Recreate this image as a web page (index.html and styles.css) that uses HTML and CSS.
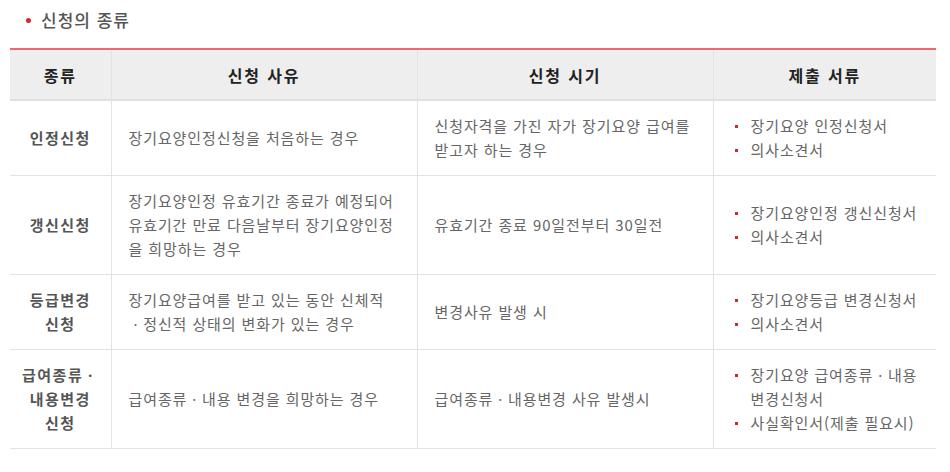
FILE: index.html
```html
<!DOCTYPE html>
<html lang="ko">
<head>
<meta charset="utf-8">
<title>신청의 종류</title>
<link rel="stylesheet" href="styles.css">
</head>
<body>
<div class="wrap">
  <h2 class="title"><span class="dot"></span>신청의 종류</h2>
  <table class="kind-table">
    <colgroup>
      <col class="c1"><col class="c2"><col class="c3"><col class="c4">
    </colgroup>
    <thead>
      <tr>
        <th>종류</th>
        <th>신청 사유</th>
        <th>신청 시기</th>
        <th>제출 서류</th>
      </tr>
    </thead>
    <tbody>
      <tr>
        <td class="kind">인정신청</td>
        <td>장기요양인정신청을 처음하는 경우</td>
        <td>신청자격을 가진 자가 장기요양 급여를<br>받고자 하는 경우</td>
        <td><ul class="docs"><li>장기요양 인정신청서</li><li>의사소견서</li></ul></td>
      </tr>
      <tr>
        <td class="kind">갱신신청</td>
        <td>장기요양인정 유효기간 종료가 예정되어<br>유효기간 만료 다음날부터 장기요양인정<br>을 희망하는 경우</td>
        <td>유효기간 종료 90일전부터 30일전</td>
        <td><ul class="docs"><li>장기요양인정 갱신신청서</li><li>의사소견서</li></ul></td>
      </tr>
      <tr>
        <td class="kind">등급변경<br>신청</td>
        <td>장기요양급여를 받고 있는 동안 신체적<br>ㆍ정신적 상태의 변화가 있는 경우</td>
        <td>변경사유 발생 시</td>
        <td><ul class="docs"><li>장기요양등급 변경신청서</li><li>의사소견서</li></ul></td>
      </tr>
      <tr>
        <td class="kind">급여종류ㆍ<br>내용변경<br>신청</td>
        <td>급여종류ㆍ내용 변경을 희망하는 경우</td>
        <td>급여종류ㆍ내용변경 사유 발생시</td>
        <td><ul class="docs"><li>장기요양 급여종류ㆍ내용<br>변경신청서</li><li>사실확인서(제출 필요시)</li></ul></td>
      </tr>
    </tbody>
  </table>
</div>
</body>
</html>
```

FILE: styles.css
```css
* { box-sizing: border-box; }
html, body { margin: 0; padding: 0; background: #fff; }
body {
  font-family: "Noto Sans CJK KR", "Noto Sans", sans-serif;
  color: #666;
}
.wrap {
  padding: 10px 14px 0 10px;
}
.title {
  display: flex;
  align-items: center;
  margin: 0 0 18px 0;
  padding-left: 16px;
  height: 20px;
  font-size: 17px;
  font-weight: 500;
  letter-spacing: 1px;
  color: #555;
  line-height: 20px;
}
.dot {
  width: 5px;
  height: 5px;
  border-radius: 50%;
  background: #cc2b2b;
  margin-right: 10px;
  margin-top: 1px;
}
.kind-table {
  width: 926px;
  border-collapse: collapse;
  table-layout: fixed;
  border-top: 2px solid #e96b6b;
  font-size: 15px;
  line-height: 24px;
  letter-spacing: 0.9px;
}
.c1 { width: 101px; }
.c2 { width: 306px; }
.c3 { width: 296px; }
.c4 { width: 223px; }
.kind-table th {
  background: #eee;
  height: 51px;
  border-top: 1px solid #e6e6e6;
  border-bottom: 2px solid #e0e0e0;
  border-left: 1px solid #e3e3e3;
  color: #222;
  font-weight: 700;
  font-size: 16px;
  letter-spacing: 1.8px;
  text-align: center;
  vertical-align: middle;
  padding: 0;
}
.kind-table td {
  border-bottom: 1px solid #e3e3e3;
  border-left: 1px solid #e3e3e3;
  padding: 13px 2px 13px 17px;
  vertical-align: middle;
  color: #666;
  word-break: keep-all;
}
.kind-table th:first-child,
.kind-table td:first-child { border-left: none; }
.kind-table td.kind {
  text-align: center;
  font-weight: 700;
  color: #555;
  letter-spacing: 1.5px;
  padding: 13px 2px;
}
.docs {
  list-style: none;
  margin: 0;
  padding: 0 0 0 4px;
}
.docs li {
  position: relative;
  padding-left: 16px;
}
.docs li::before {
  content: "";
  position: absolute;
  left: 0;
  top: 11px;
  width: 3px;
  height: 3px;
  background: #cc2b2b;
}
```
